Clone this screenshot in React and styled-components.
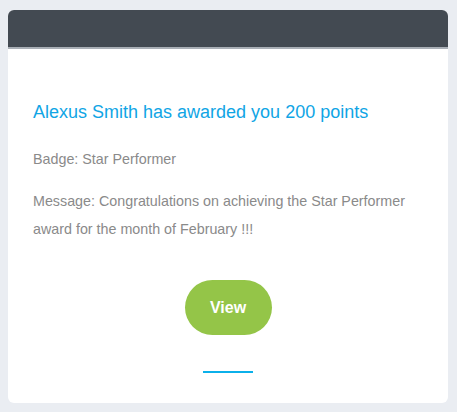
import React from "react";
import styled, { createGlobalStyle } from "styled-components";

const Global = createGlobalStyle`
  html, body { margin: 0; padding: 0; background: #eaedf2; }
  body { font-family: "Liberation Sans", Arial, sans-serif; }
`;

const Page = styled.div`
  padding: 10px 9px 9px 8px;
`;

const Card = styled.div`
  background: #ffffff;
  border-radius: 6px;
  overflow: hidden;
`;

const Header = styled.div`
  height: 37px;
  background: #434a52;
  border-bottom: 2px solid #a9afb6;
`;

const Body = styled.div`
  padding: 52px 25px 30px 25px;
  display: flex;
  flex-direction: column;
`;

const Title = styled.h2`
  margin: 0;
  font-size: 18px;
  font-weight: normal;
  color: #10a5e5;
  line-height: 22px;
`;

const Text = styled.p`
  margin: ${(p) => p.$top || 0}px 0 0;
  font-size: 14.3px;
  color: #8a8a8a;
  line-height: 28px;
`;

const Actions = styled.div`
  display: flex;
  flex-direction: column;
  align-items: center;
  margin-top: 37px;
`;

const ViewButton = styled.button`
  width: 87px;
  height: 55px;
  border: none;
  border-radius: 28px;
  background: #94c548;
  color: #ffffff;
  font-family: "Liberation Sans", Arial, sans-serif;
  font-weight: bold;
  font-size: 16px;
  cursor: pointer;
`;

const Divider = styled.div`
  width: 50px;
  height: 2px;
  background: #0bb0ea;
  margin-top: 36px;
`;

export default function App() {
  return (
    <>
      <Global />
      <Page>
        <Card>
          <Header />
          <Body>
            <Title>Alexus Smith has awarded you 200 points</Title>
            <Text $top={22}>Badge: Star Performer</Text>
            <Text $top={14}>
              Message: Congratulations on achieving the Star Performer award for the month of February !!!
            </Text>
            <Actions>
              <ViewButton>View</ViewButton>
              <Divider />
            </Actions>
          </Body>
        </Card>
      </Page>
    </>
  );
}
